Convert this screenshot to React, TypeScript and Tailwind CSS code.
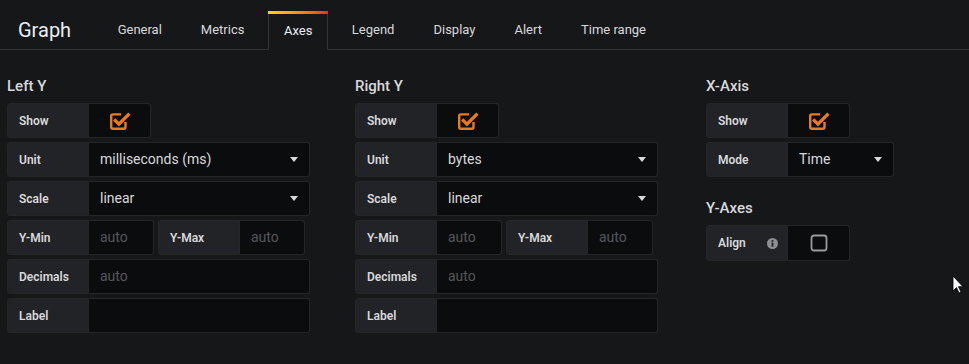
import React from "react";

const tabs = ["General", "Metrics", "Axes", "Legend", "Display", "Alert", "Time range"];

function CheckIcon({ checked }: { checked: boolean }) {
  if (!checked) {
    return (
      <svg width="18" height="18" viewBox="0 0 18 18">
        <rect x="1.5" y="1.5" width="15" height="15" rx="2.5" fill="none" stroke="#9a9b9d" strokeWidth="1.8" />
      </svg>
    );
  }
  return (
    <svg width="22" height="22" viewBox="0 0 20 20">
      <path d="M15 11v4.5a1.5 1.5 0 0 1-1.5 1.5h-10A1.5 1.5 0 0 1 2 15.5v-10A1.5 1.5 0 0 1 3.5 4H11" fill="none" stroke="#eb7b18" strokeWidth="2.2" />
      <path d="M5.8 9.6l3.2 3.2L17.5 4.3" fill="none" stroke="#eb7b18" strokeWidth="3" strokeLinecap="square" />
    </svg>
  );
}

function Caret() {
  return (
    <svg width="8" height="5" viewBox="0 0 8 5" className="shrink-0">
      <path d="M0 0h8L4 5z" fill="#d8d9da" />
    </svg>
  );
}

function Label({ children, w = "w-[82px]" }: { children: React.ReactNode; w?: string }) {
  return (
    <div className={`${w} h-full flex items-center pl-[11px] bg-[#222326] border border-[#262628] rounded-l-[3px] text-[12px] font-semibold text-[#d8d9da]`}>
      {children}
    </div>
  );
}

function Box({ children, w, pad = true }: { children?: React.ReactNode; w: string; pad?: boolean }) {
  return (
    <div className={`${w} h-full flex items-center ${pad ? "px-[11px]" : "justify-center"} bg-[#0b0c0e] border border-[#262628] border-l-0 rounded-r-[3px] text-[14px] text-[#d8d9da]`}>
      {children}
    </div>
  );
}

function Select({ value, w }: { value: string; w: string }) {
  return (
    <Box w={w}>
      <span className="flex-1">{value}</span>
      <Caret />
    </Box>
  );
}

function Row({ children }: { children: React.ReactNode }) {
  return <div className="flex h-[35px]">{children}</div>;
}

function Heading({ children }: { children: React.ReactNode }) {
  return <div className="text-[15px] font-medium text-[#d8d9da] h-[20px] leading-[20px] mb-[7px]">{children}</div>;
}

function YColumn({ title, unit }: { title: string; unit: string }) {
  return (
    <div>
      <Heading>{title}</Heading>
      <div className="flex flex-col gap-[4px]">
        <Row>
          <Label>Show</Label>
          <Box w="w-[62px]" pad={false}>
            <CheckIcon checked />
          </Box>
        </Row>
        <Row>
          <Label>Unit</Label>
          <Select value={unit} w="w-[221px]" />
        </Row>
        <Row>
          <Label>Scale</Label>
          <Select value="linear" w="w-[221px]" />
        </Row>
        <Row>
          <Label>Y-Min</Label>
          <Box w="w-[65px]">
            <span className="text-[#55575b]">auto</span>
          </Box>
          <div className="flex h-full ml-[4px]">
            <Label>Y-Max</Label>
            <Box w="w-[65px]">
              <span className="text-[#55575b]">auto</span>
            </Box>
          </div>
        </Row>
        <Row>
          <Label>Decimals</Label>
          <Box w="w-[221px]">
            <span className="text-[#55575b]">auto</span>
          </Box>
        </Row>
        <Row>
          <Label>Label</Label>
          <Box w="w-[221px]" />
        </Row>
      </div>
    </div>
  );
}

export default function App() {
  return (
    <div className="relative w-[969px] h-[364px] bg-[#161719] overflow-hidden" style={{ fontFamily: "Roboto, 'Liberation Sans', sans-serif" }}>
      <div className="flex items-end h-[50px] border-b border-[#333436]">
        <div className="h-[38px] flex items-center pl-[18px] pr-[27px] text-[20px] text-[#e9edf2]">Graph</div>
        {tabs.map((t) =>
          t === "Axes" ? (
            <div key={t} className="relative mx-[4px] -mb-px h-[39px] px-[15px] flex items-center text-[13px] text-[#e9edf2] bg-[#161719] border-x border-[#333436]">
              <div className="absolute -left-px -right-px top-0 h-[3px] bg-gradient-to-r from-[#ffd500] via-[#f68d20] to-[#e0301e]" />
              {t}
            </div>
          ) : (
            <div key={t} className="mx-[4px] h-[38px] px-[15.5px] flex items-center text-[13px] text-[#d8d9da]">
              {t}
            </div>
          )
        )}
      </div>

      <div className="grid grid-cols-[348px_351px_1fr] pl-[7px] pt-[26px]">
        <YColumn title="Left Y" unit="milliseconds (ms)" />
        <YColumn title="Right Y" unit="bytes" />
        <div>
          <Heading>X-Axis</Heading>
          <div className="flex flex-col gap-[4px]">
            <Row>
              <Label>Show</Label>
              <Box w="w-[62px]" pad={false}>
                <CheckIcon checked />
              </Box>
            </Row>
            <Row>
              <Label>Mode</Label>
              <Select value="Time" w="w-[106px]" />
            </Row>
          </div>
          <div className="mt-[21px]">
            <Heading>Y-Axes</Heading>
            <div className="flex h-[36px]">
              <Label>
                <span className="flex-1">Align</span>
                <svg width="11" height="11" viewBox="0 0 12 12" className="mr-[9px]">
                  <circle cx="6" cy="6" r="6" fill="#8e8f92" />
                  <rect x="5" y="5" width="2" height="4.5" fill="#222326" />
                  <rect x="5" y="2.3" width="2" height="1.8" fill="#222326" />
                </svg>
              </Label>
              <Box w="w-[62px]" pad={false}>
                <CheckIcon checked={false} />
              </Box>
            </div>
          </div>
        </div>
      </div>

      <svg width="13" height="20" viewBox="0 0 13 20" className="absolute left-[952px] top-[275px]">
        <path d="M1 1v15l3.5-3.5 2.5 5.5 2-1-2.5-5.3H11z" fill="#ffffff" stroke="#000" strokeWidth="0.8" />
      </svg>
    </div>
  );
}
